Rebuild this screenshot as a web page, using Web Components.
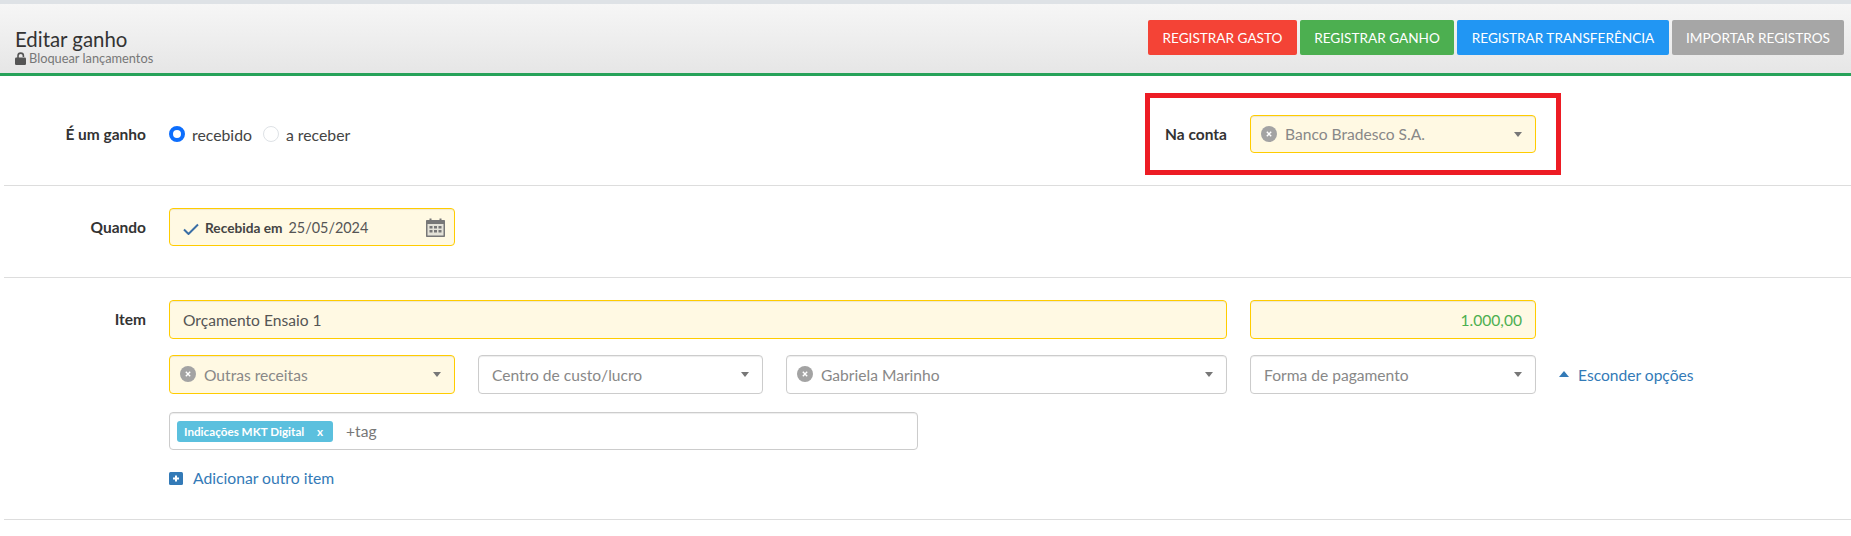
<!DOCTYPE html>
<html lang="pt-BR">
<head>
<meta charset="utf-8">
<title>Editar ganho</title>
<style>
html, body { margin: 0; background: #fff; }
body { font-family: Lato, "Liberation Sans", sans-serif; color: #333; position: relative; height: 536px; overflow: hidden; }
</style>
</head>
<body>
<page-header title-text="Editar ganho" sub-text="Bloquear lançamentos">
  <action-button color="#f44336" width="149">REGISTRAR GASTO</action-button>
  <action-button color="#4caf50" width="154">REGISTRAR GANHO</action-button>
  <action-button color="#2196f3" width="212">REGISTRAR TRANSFERÊNCIA</action-button>
  <action-button color="#a6a6a6" width="172">IMPORTAR REGISTROS</action-button>
</page-header>

<form-row kind="first" label="É um ganho">
  <radio-group style="grid-column: 1 / 3">
    <radio-option checked>recebido</radio-option>
    <radio-option>a receber</radio-option>
  </radio-group>
  <side-label>Na conta</side-label>
  <select-field required clearable>Banco Bradesco S.A.</select-field>
</form-row>

<form-row kind="second" label="Quando">
  <date-field prefix="Recebida em" value="25/05/2024"></date-field>
</form-row>

<form-row kind="third" label="Item">
  <text-field required style="grid-column: 1 / 4">Orçamento Ensaio 1</text-field>
  <text-field required money>1.000,00</text-field>
  <select-field required clearable style="grid-column: 1">Outras receitas</select-field>
  <select-field>Centro de custo/lucro</select-field>
  <select-field clearable>Gabriela Marinho</select-field>
  <select-field>Forma de pagamento</select-field>
  <toggle-link>Esconder opções</toggle-link>
  <tag-input style="grid-column: 1 / 5" tag="Indicações MKT Digital"></tag-input>
  <add-link style="grid-column: 1 / 5">Adicionar outro item</add-link>
</form-row>

<mark-box></mark-box>

<script>
const fieldBox = `
  box-sizing: border-box;
  height: var(--field-h, 38px);
  border: 1px solid #ccc;
  border-radius: 4px;
  background: #fff;
  box-shadow: inset 0 1px 1px rgba(0, 0, 0, .075);
  font: 15.6px Lato, "Liberation Sans", sans-serif;
`;
const requiredBox = `
  border-color: #fc0;
  background: #fff9e3;
`;

function makeShadow(el, html) {
  const shadow = el.attachShadow({ mode: "open" });
  const tpl = document.createElement("template");
  tpl.innerHTML = html;
  shadow.appendChild(tpl.content.cloneNode(true));
  return shadow;
}

class PageHeader extends HTMLElement {
  connectedCallback() {
    makeShadow(this, `
      <style>
        :host { display: block; border-top: 4px solid #dee2e6; }
        .bar {
          box-sizing: border-box;
          height: 72px;
          padding: 16px 7px 0 15px;
          display: flex;
          justify-content: space-between;
          background: linear-gradient(#f6f6f6, #e6e6e6);
          border-bottom: 3px solid #26a259;
        }
        h1 { margin: 7px 0 0; font: 400 20.400px/24px Lato, "Liberation Sans", sans-serif; color: #333; }
        .sub { display: flex; align-items: center; gap: 3px; font-size: 12.800px; line-height: 14px; color: #777; }
        .sub svg { width: 11px; height: 13px; flex: none; }
        .buttons { display: flex; gap: 3px; }
      </style>
      <div class="bar">
        <div>
          <h1>${this.getAttribute("title-text")}</h1>
          <div class="sub">
            <svg viewBox="0 0 11 13"><path d="M3 6V3.800a2.700 2.700 0 0 1 5.400 0V5" fill="none" stroke="#555" stroke-width="1.600"/><rect y="5.500" width="11" height="7.500" rx="1.200" fill="#555"/></svg>
            <span>${this.getAttribute("sub-text")}</span>
          </div>
        </div>
        <div class="buttons"><slot></slot></div>
      </div>
    `);
  }
}

class ActionButton extends HTMLElement {
  connectedCallback() {
    makeShadow(this, `
      <style>
        :host { display: block; }
        button {
          box-sizing: border-box;
          width: ${this.getAttribute("width")}px;
          height: 35px;
          padding: 0;
          border: 0;
          border-radius: 2px;
          background: ${this.getAttribute("color")};
          color: #fff;
          font: 13.600px Lato, "Liberation Sans", sans-serif;
        }
      </style>
      <button><slot></slot></button>
    `);
  }
}

class FormRow extends HTMLElement {
  connectedCallback() {
    const kind = this.getAttribute("kind");
    const pads = { first: "39px 0 32px", second: "22px 0 31px", third: "22px 0 32px" };
    makeShadow(this, `
      <style>
        :host {
          display: block;
          margin-left: 4px;
          border-bottom: 1px solid #ddd;
          --field-h: ${kind === "third" ? 39 : 38}px;
        }
        .row {
          padding: ${pads[kind]};
          display: grid;
          grid-template-columns: 142px 1fr;
          column-gap: 23px;
          align-items: start;
        }
        label { display: block; text-align: right; font-weight: 700; font-size: 15.500px; line-height: var(--field-h); color: #333; }
        .fields {
          display: grid;
          grid-template-columns: 286px 285px 441px 286px 1fr;
          column-gap: 23px;
          row-gap: 16px;
          align-items: center;
        }
      </style>
      <div class="row">
        <label>${this.getAttribute("label")}</label>
        <div class="fields"><slot></slot></div>
      </div>
    `);
  }
}

class RadioGroup extends HTMLElement {
  connectedCallback() {
    makeShadow(this, `
      <style>:host { display: flex; gap: 11px; align-items: center; height: 38px; }</style>
      <slot></slot>
    `);
  }
}

class RadioOption extends HTMLElement {
  connectedCallback() {
    const on = this.hasAttribute("checked");
    makeShadow(this, `
      <style>
        :host { display: flex; align-items: center; gap: 7px; font-size: 15.800px; color: #444; }
        i {
          box-sizing: border-box;
          width: 16px;
          height: 16px;
          border-radius: 50%;
          border: ${on ? "4.500px solid #0d6efd" : "1px solid #dee2e6"};
          background: #fff;
        }
      </style>
      <i></i><span><slot></slot></span>
    `);
  }
}

class SideLabel extends HTMLElement {
  connectedCallback() {
    makeShadow(this, `
      <style>:host { display: block; text-align: right; font-weight: 700; font-size: 15.500px; color: #333; }</style>
      <slot></slot>
    `);
  }
}

class SelectField extends HTMLElement {
  connectedCallback() {
    const clear = this.hasAttribute("clearable")
      ? `<svg class="clear" viewBox="0 0 16 16"><circle cx="8" cy="8" r="8" fill="#a3a3a3"/><path d="M5.800 5.800l4.400 4.400M10.200 5.800l-4.400 4.400" stroke="#fff" stroke-width="1.400"/></svg>`
      : "";
    makeShadow(this, `
      <style>
        :host { display: block; }
        .box {
          ${fieldBox}
          ${this.hasAttribute("required") ? requiredBox : ""}
          display: flex;
          align-items: center;
          padding: 0 13px 0 ${clear ? "10" : "13"}px;
          color: #888;
        }
        .clear { width: 16px; height: 16px; margin-right: 8px; margin-top: -1px; flex: none; }
        span { flex: 1; }
        .caret { width: 0; height: 0; border: 4.500px solid transparent; border-top: 5px solid #777; border-bottom: 0; }
      </style>
      <div class="box">${clear}<span><slot></slot></span><i class="caret"></i></div>
    `);
  }
}

class TextField extends HTMLElement {
  connectedCallback() {
    const money = this.hasAttribute("money");
    makeShadow(this, `
      <style>
        :host { display: block; }
        .box {
          ${fieldBox}
          ${this.hasAttribute("required") ? requiredBox : ""}
          display: flex;
          align-items: center;
          justify-content: ${money ? "flex-end" : "flex-start"};
          padding: 0 13px;
          color: ${money ? "#4caf50" : "#555"};
        }
      </style>
      <div class="box"><slot></slot></div>
    `);
  }
}

class DateField extends HTMLElement {
  connectedCallback() {
    makeShadow(this, `
      <style>
        :host { display: block; }
        .box {
          ${fieldBox}
          ${requiredBox}
          display: flex;
          align-items: center;
          padding: 0 9px 0 13px;
          color: #555;
        }
        .check { width: 16px; height: 12px; margin-top: 3px; flex: none; }
        b { margin: 0 6px; font-size: 13.700px; color: #444; }
        span { flex: 1; font-size: 14.400px; }
        .cal { width: 19px; height: 19px; flex: none; }
      </style>
      <div class="box">
        <svg class="check" viewBox="0 0 16 12"><path d="M1 6.500l4.500 4.500L15 1.500" fill="none" stroke="#3a6ea5" stroke-width="2"/></svg>
        <b>${this.getAttribute("prefix")}</b>
        <span>${this.getAttribute("value")}</span>
        <svg class="cal" viewBox="0 0 19 19">
          <path fill="#777" d="M1 2h2.500V.500h2V2h8V.500h2V2H18c.6 0 1 .4 1 1v15c0 .6-.4 1-1 1H1c-.6 0-1-.4-1-1V3c0-.6.4-1 1-1z"/>
          <rect x="1.500" y="6" width="16" height="11.500" fill="#e4e2d8"/>
          <path fill="#777" d="M3.500 8h3v2.500h-3zM8 8h3v2.500H8zM12.500 8h3v2.500h-3zM3.500 12h3v2.500h-3zM8 12h3v2.500H8zM12.500 12h3v2.500h-3z"/>
        </svg>
      </div>
    `);
  }
}

class TagInput extends HTMLElement {
  connectedCallback() {
    makeShadow(this, `
      <style>
        :host { display: block; margin-top: 2px; }
        .box {
          ${fieldBox}
          height: 38px;
          width: 749px;
          display: flex;
          align-items: center;
          padding: 0 7px;
          color: #777;
        }
        .tag {
          display: flex;
          justify-content: space-between;
          align-items: center;
          box-sizing: border-box;
          width: 156px;
          height: 21px;
          padding: 0 10px 0 7px;
          margin-right: 13px;
          border-radius: 3px;
          background: #5bc0de;
          color: #fff;
          font-size: 11.700px;
          font-weight: 700;
        }
      </style>
      <div class="box"><div class="tag"><span>${this.getAttribute("tag")}</span><span>x</span></div><span>+tag</span></div>
    `);
  }
}

class AddLink extends HTMLElement {
  connectedCallback() {
    makeShadow(this, `
      <style>
        :host { display: flex; align-items: center; gap: 10px; margin-top: 3px; font-size: 15.700px; color: #337ab7; line-height: 18px; }
        svg { width: 14px; height: 13px; }
      </style>
      <svg viewBox="0 0 14 13"><rect width="14" height="13" rx="1.500" fill="#337ab7"/><path d="M7 3.500v6M4 6.500h6" stroke="#fff" stroke-width="2"/></svg>
      <span><slot></slot></span>
    `);
  }
}

class ToggleLink extends HTMLElement {
  connectedCallback() {
    makeShadow(this, `
      <style>
        :host { display: flex; align-items: center; gap: 9px; font-size: 15.600px; color: #337ab7; }
        i { width: 0; height: 0; border: 5px solid transparent; border-bottom: 6px solid #337ab7; border-top: 0; margin-top: -2px; }
      </style>
      <i></i><span><slot></slot></span>
    `);
  }
}

// the red frame is an annotation drawn over the form
class MarkBox extends HTMLElement {
  connectedCallback() {
    makeShadow(this, `
      <style>
        :host {
          position: absolute;
          left: 1145px;
          top: 93px;
          width: 416px;
          height: 82px;
          box-sizing: border-box;
          border: 5px solid #ed1c24;
        }
      </style>
    `);
  }
}

customElements.define("page-header", PageHeader);
customElements.define("action-button", ActionButton);
customElements.define("form-row", FormRow);
customElements.define("radio-group", RadioGroup);
customElements.define("radio-option", RadioOption);
customElements.define("side-label", SideLabel);
customElements.define("select-field", SelectField);
customElements.define("text-field", TextField);
customElements.define("date-field", DateField);
customElements.define("tag-input", TagInput);
customElements.define("add-link", AddLink);
customElements.define("toggle-link", ToggleLink);
customElements.define("mark-box", MarkBox);
</script>
</body>
</html>
